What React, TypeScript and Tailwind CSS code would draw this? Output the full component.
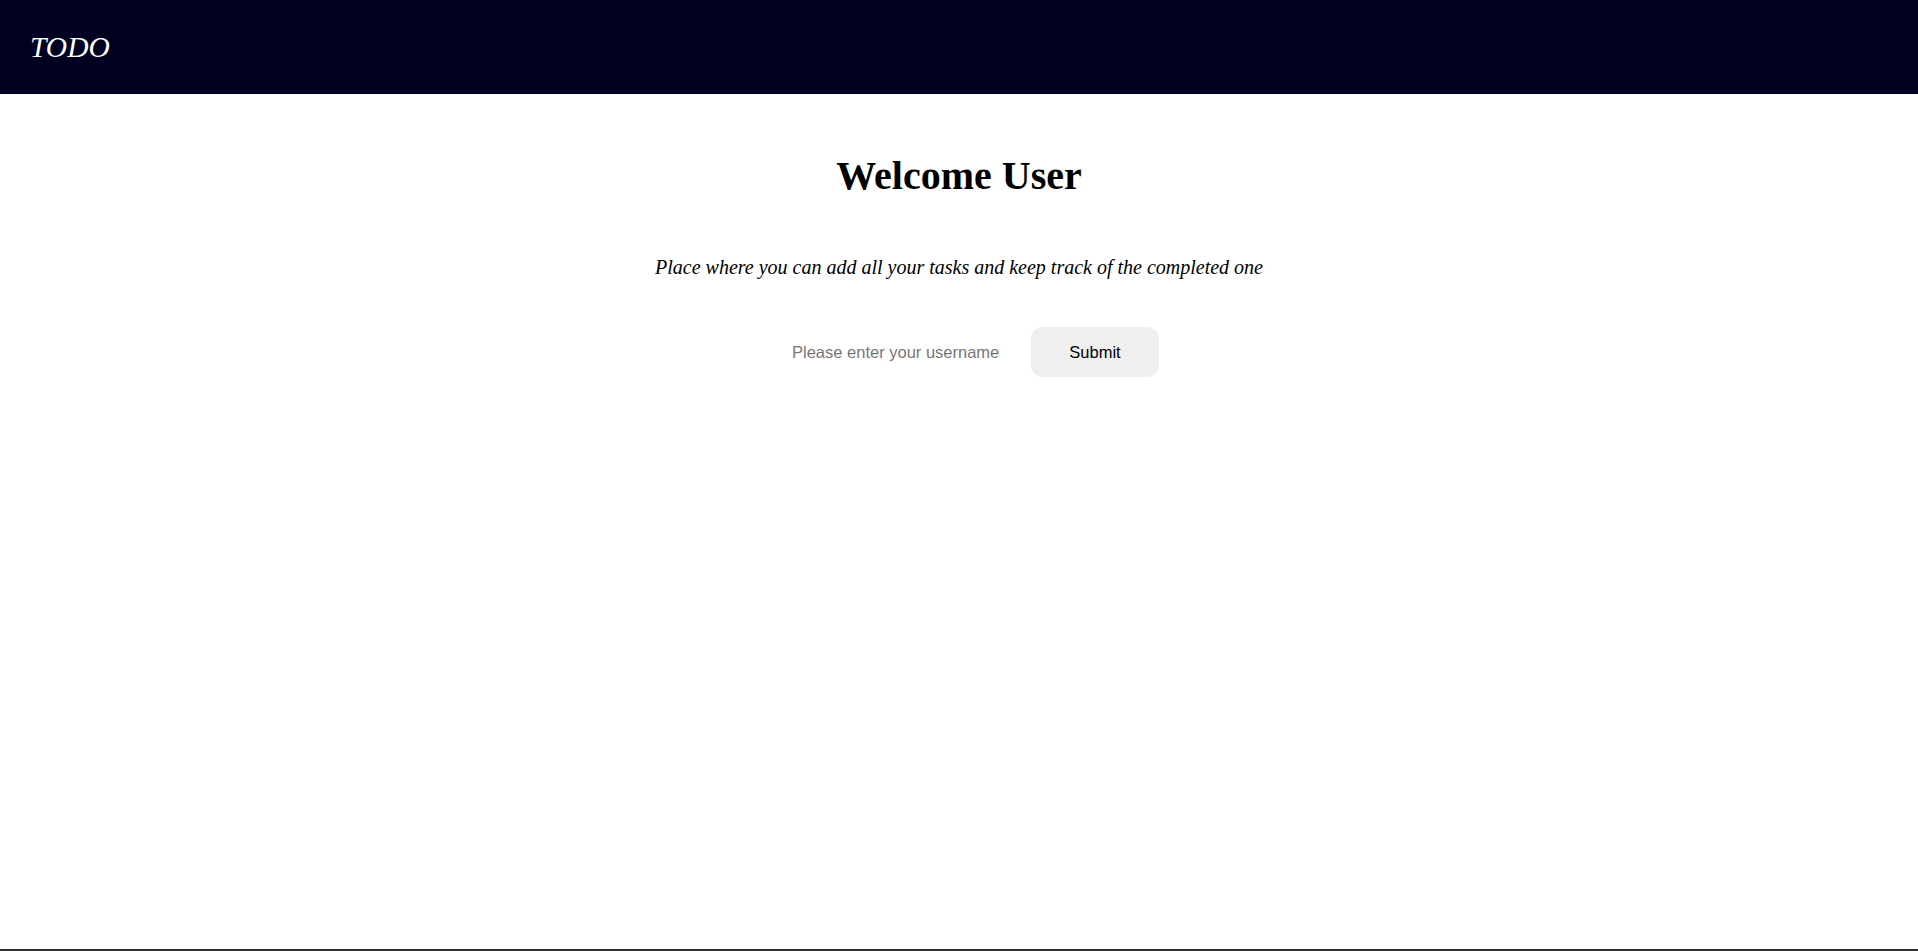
import React from "react";

export default function App() {
  return (
    <div className="flex h-screen flex-col bg-white">
      <header className="flex h-[94px] shrink-0 items-center bg-[#000021] pl-[30px]">
        <span
          className="text-[29.5px] italic text-white"
          style={{ fontFamily: '"Liberation Serif", "Times New Roman", serif' }}
        >
          TODO
        </span>
      </header>
      <main
        className="flex flex-1 flex-col items-center"
        style={{ fontFamily: '"Liberation Serif", "Times New Roman", serif' }}
      >
        <h1 className="mt-[58px] text-[40px] font-bold leading-[48px] text-black">Welcome User</h1>
        <p className="mt-[55px] text-[20px] italic leading-[24px] text-black">
          Place where you can add all your tasks and keep track of the completed one
        </p>
        <div
          className="mt-[48px] flex items-center gap-[10px]"
          style={{ fontFamily: '"Liberation Sans", Arial, sans-serif' }}
        >
          <input
            type="text"
            placeholder="Please enter your username"
            className="h-[50px] w-[262px] bg-transparent pl-[33px] text-[16.5px] text-black outline-none placeholder:text-[#767676]"
          />
          <button className="h-[50px] w-[128px] rounded-[12px] bg-[#efefef] text-[16.5px] text-black">
            Submit
          </button>
        </div>
      </main>
      <div className="h-[2px] shrink-0 bg-[#2e2e2e]" />
    </div>
  );
}
